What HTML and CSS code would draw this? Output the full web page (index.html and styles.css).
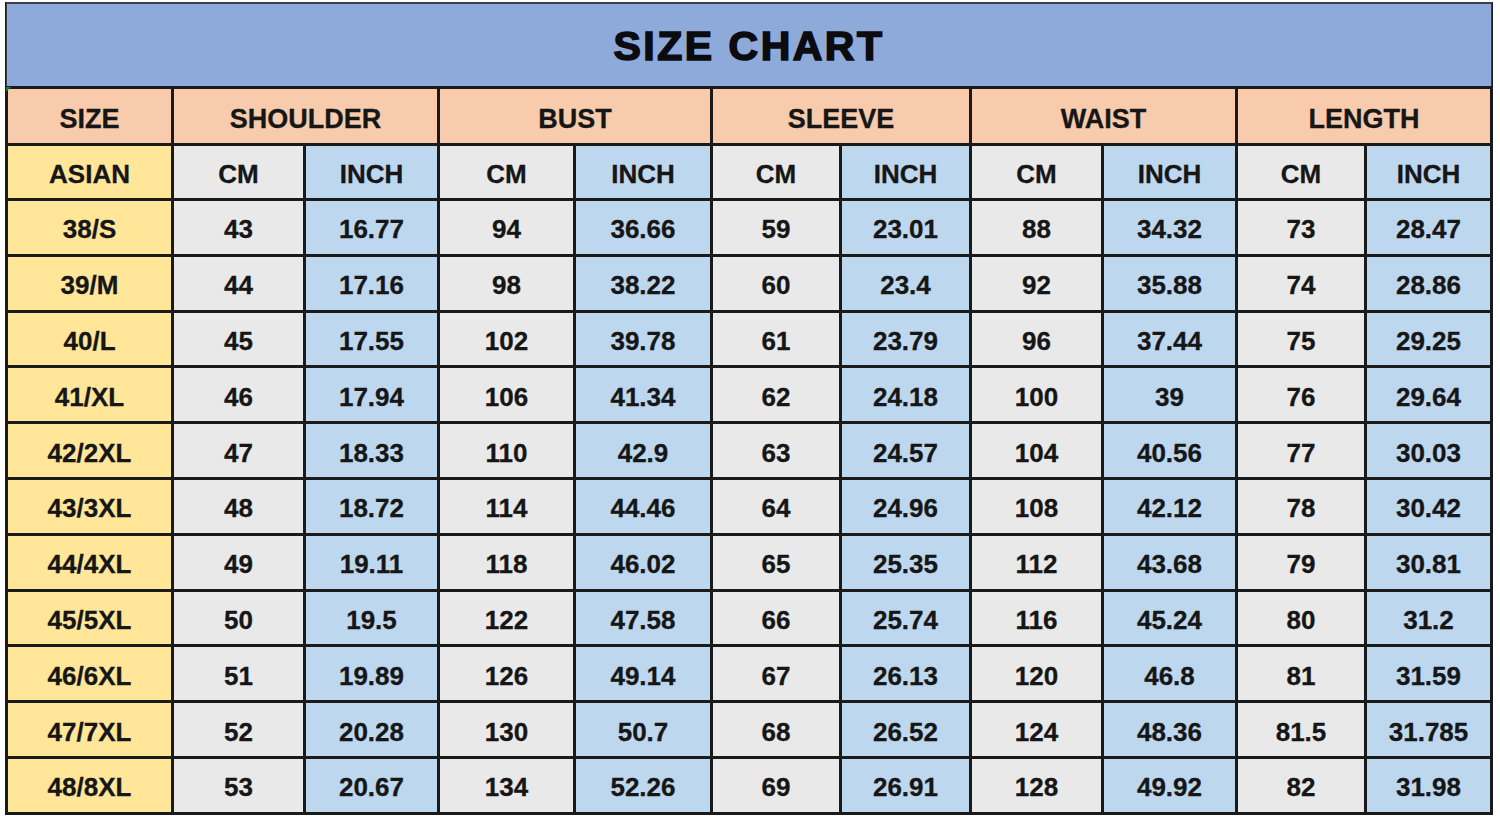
FILE: index.html
```html
<!DOCTYPE html>
<html>
<head>
<meta charset="utf-8">
<title>Size Chart</title>
<link rel="stylesheet" href="styles.css">
</head>
<body>
<div class="chart">
  <div class="title"><span class="title-text">SIZE CHART</span></div>
  <div class="grid">
    <div class="c hd first">SIZE</div>
    <div class="c hd span2">SHOULDER</div>
    <div class="c hd span2">BUST</div>
    <div class="c hd span2">SLEEVE</div>
    <div class="c hd span2">WAIST</div>
    <div class="c hd span2">LENGTH</div>

    <div class="c sz">ASIAN</div>
    <div class="c cm">CM</div><div class="c in">INCH</div>
    <div class="c cm">CM</div><div class="c in">INCH</div>
    <div class="c cm">CM</div><div class="c in">INCH</div>
    <div class="c cm">CM</div><div class="c in">INCH</div>
    <div class="c cm">CM</div><div class="c in">INCH</div>

    <div class="c sz">38/S</div><div class="c cm">43</div><div class="c in">16.77</div><div class="c cm">94</div><div class="c in">36.66</div><div class="c cm">59</div><div class="c in">23.01</div><div class="c cm">88</div><div class="c in">34.32</div><div class="c cm">73</div><div class="c in">28.47</div>
    <div class="c sz">39/M</div><div class="c cm">44</div><div class="c in">17.16</div><div class="c cm">98</div><div class="c in">38.22</div><div class="c cm">60</div><div class="c in">23.4</div><div class="c cm">92</div><div class="c in">35.88</div><div class="c cm">74</div><div class="c in">28.86</div>
    <div class="c sz">40/L</div><div class="c cm">45</div><div class="c in">17.55</div><div class="c cm">102</div><div class="c in">39.78</div><div class="c cm">61</div><div class="c in">23.79</div><div class="c cm">96</div><div class="c in">37.44</div><div class="c cm">75</div><div class="c in">29.25</div>
    <div class="c sz">41/XL</div><div class="c cm">46</div><div class="c in">17.94</div><div class="c cm">106</div><div class="c in">41.34</div><div class="c cm">62</div><div class="c in">24.18</div><div class="c cm">100</div><div class="c in">39</div><div class="c cm">76</div><div class="c in">29.64</div>
    <div class="c sz">42/2XL</div><div class="c cm">47</div><div class="c in">18.33</div><div class="c cm">110</div><div class="c in">42.9</div><div class="c cm">63</div><div class="c in">24.57</div><div class="c cm">104</div><div class="c in">40.56</div><div class="c cm">77</div><div class="c in">30.03</div>
    <div class="c sz">43/3XL</div><div class="c cm">48</div><div class="c in">18.72</div><div class="c cm">114</div><div class="c in">44.46</div><div class="c cm">64</div><div class="c in">24.96</div><div class="c cm">108</div><div class="c in">42.12</div><div class="c cm">78</div><div class="c in">30.42</div>
    <div class="c sz">44/4XL</div><div class="c cm">49</div><div class="c in">19.11</div><div class="c cm">118</div><div class="c in">46.02</div><div class="c cm">65</div><div class="c in">25.35</div><div class="c cm">112</div><div class="c in">43.68</div><div class="c cm">79</div><div class="c in">30.81</div>
    <div class="c sz">45/5XL</div><div class="c cm">50</div><div class="c in">19.5</div><div class="c cm">122</div><div class="c in">47.58</div><div class="c cm">66</div><div class="c in">25.74</div><div class="c cm">116</div><div class="c in">45.24</div><div class="c cm">80</div><div class="c in">31.2</div>
    <div class="c sz">46/6XL</div><div class="c cm">51</div><div class="c in">19.89</div><div class="c cm">126</div><div class="c in">49.14</div><div class="c cm">67</div><div class="c in">26.13</div><div class="c cm">120</div><div class="c in">46.8</div><div class="c cm">81</div><div class="c in">31.59</div>
    <div class="c sz">47/7XL</div><div class="c cm">52</div><div class="c in">20.28</div><div class="c cm">130</div><div class="c in">50.7</div><div class="c cm">68</div><div class="c in">26.52</div><div class="c cm">124</div><div class="c in">48.36</div><div class="c cm">81.5</div><div class="c in">31.785</div>
    <div class="c sz">48/8XL</div><div class="c cm">53</div><div class="c in">20.67</div><div class="c cm">134</div><div class="c in">52.26</div><div class="c cm">69</div><div class="c in">26.91</div><div class="c cm">128</div><div class="c in">49.92</div><div class="c cm">82</div><div class="c in">31.98</div>
  </div>
</div>
</body>
</html>
```

FILE: styles.css
```css
html, body {
  margin: 0;
  padding: 0;
  background: #ffffff;
}

body {
  font-family: "Liberation Sans", Arial, sans-serif;
  color: #161616;
}

.chart {
  margin: 2px 0 0 5px;
  width: 1488px;
  background: #1a1a1a;
}

.title {
  height: 84px;
  margin: 0 1px;
  border-top: 2px solid #3a3f4a;
  border-left: 1px solid #3a3f4a;
  border-right: 1px solid #3a3f4a;
  background: #8eaadb;
  display: flex;
  align-items: center;
  justify-content: center;
  box-sizing: border-box;
}

.title-text {
  font-family: "Liberation Sans", Arial, sans-serif;
  font-weight: bold;
  font-size: 41px;
  letter-spacing: 2.5px;
  color: #0b0b10;
  -webkit-text-stroke: 1.6px #0b0b10;
  margin-top: 2px;
}

.grid {
  display: grid;
  grid-template-columns: 163px 129px 131px 133px 134px 126px 127px 129px 131px 126px 123px;
  grid-template-rows: 54px 52px repeat(11, 52.8px);
  gap: 3px;
  padding: 3px;
}

.c {
  display: flex;
  align-items: center;
  justify-content: center;
  font-weight: bold;
  font-size: 26px;
  -webkit-text-stroke: 0.3px #161616;
  white-space: nowrap;
  padding-top: 5px;
}

.hd {
  background: #f8cbad;
  font-size: 27px;
  padding-top: 6px;
}

.span2 {
  grid-column: span 2;
}

.first {
  position: relative;
}

.first::before {
  content: "";
  position: absolute;
  left: -2px;
  top: -2px;
  border-style: solid;
  border-width: 5px 5px 0 0;
  border-color: #1f7a2a transparent transparent transparent;
}

.sz {
  background: #ffe699;
}

.cm {
  background: #e9e9e9;
}

.in {
  background: #bdd7ee;
}
```
